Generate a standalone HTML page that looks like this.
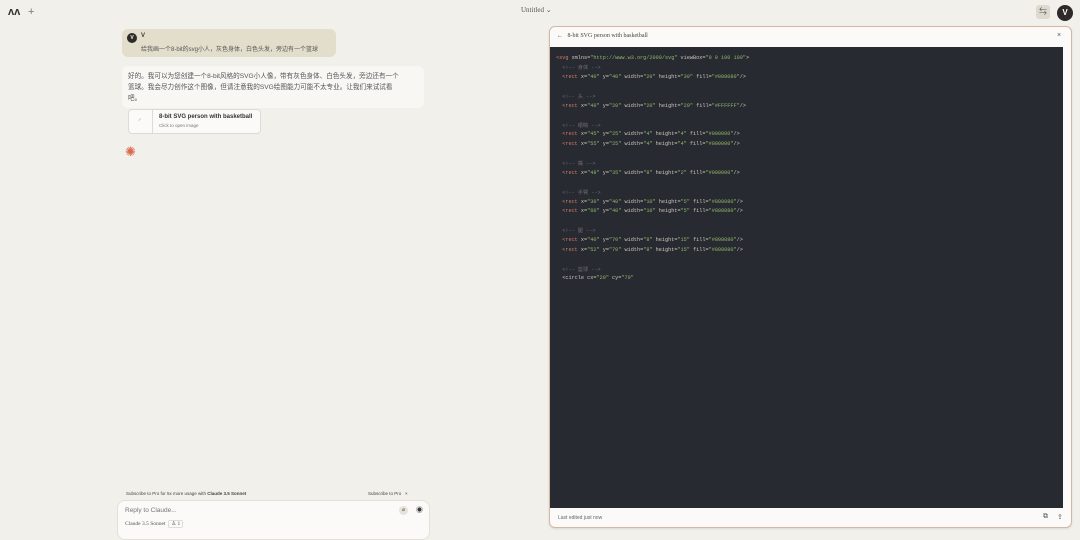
<!DOCTYPE html>
<html><head><meta charset="utf-8"><style>
*{margin:0;padding:0;box-sizing:border-box}
body{width:1080px;height:536px;background:#f2f0eb;font-family:"Liberation Sans","Noto Sans CJK SC",sans-serif;position:relative;overflow:hidden;color:#3a3835}
.abs{position:absolute}
.code{position:absolute;left:550px;top:47px;width:513px;height:461px;background:#282a31;font-family:"Liberation Mono",monospace;font-size:5.2px;color:#c9c6b8}
.code div{position:absolute;left:6px;white-space:pre}
.g{color:#8fb56a}.o{color:#d79a6a}.c{color:#6b6d72}.r{color:#d07a6a}
</style></head><body>
<div class="abs" style="left:8px;top:6px;font-weight:bold;font-size:11px;color:#333">ʌʌ</div>
<div class="abs" style="left:28px;top:6px;font-size:11px;color:#777">+</div>
<div class="abs" style="left:521px;top:6px;font-size:7px;color:#555;font-family:'Liberation Serif',serif">Untitled ⌄</div>
<div class="abs" style="left:1036px;top:5px;width:14px;height:14px;background:#dcd9cf;border-radius:3px;font-size:8px;text-align:center;line-height:14px;color:#555">⇆</div>
<div class="abs" style="left:1057px;top:5px;width:16px;height:16px;background:#2d2a27;border-radius:50%;color:#fff;font-size:8px;font-weight:bold;text-align:center;line-height:16px">V</div>

<div class="abs" style="left:122px;top:29px;width:214px;height:28px;background:#e3ddcb;border-radius:6px"></div>
<div class="abs" style="left:127px;top:33px;width:10px;height:10px;background:#2d2a27;border-radius:50%;color:#fff;font-size:5px;text-align:center;line-height:10px;font-weight:bold">V</div>
<div class="abs" style="left:141px;top:33px;font-size:6px;font-weight:bold">V</div>
<div class="abs" style="left:141px;top:44px;font-size:6px;color:#555">给我画一个8-bit的svg小人，灰色身体，白色头发，旁边有一个篮球</div>

<div class="abs" style="left:122px;top:66px;width:302px;height:42px;background:#f8f7f4;border-radius:6px"></div>
<div class="abs" style="left:128px;top:71px;white-space:nowrap;font-size:6.6px;line-height:11px;color:#555">好的。我可以为您创建一个8-bit风格的SVG小人像，带有灰色身体、白色头发，旁边还有一个<br>篮球。我会尽力创作这个图像，但请注意我的SVG绘图能力可能不太专业。让我们来试试看<br>吧。</div>
<div class="abs" style="left:128px;top:109px;width:133px;height:25px;background:#fbfaf8;border:1px solid #dedbd2;border-radius:4px"></div>
<div class="abs" style="left:128px;top:109px;width:25px;height:25px;border-right:1px solid #dedbd2;font-size:7px;color:#999;text-align:center;line-height:25px">◜</div>
<div class="abs" style="left:159px;top:114px;font-size:6px;font-weight:bold;color:#333">8-bit SVG person with basketball</div>
<div class="abs" style="left:159px;top:123px;font-size:4.5px;color:#777">Click to open image</div>
<div class="abs" style="left:125px;top:144px;font-size:13px;color:#d9694a">✺</div>

<div class="abs" style="left:126px;top:491px;font-size:4.5px;color:#444">Subscribe to Pro for 5x more usage with <b>Claude 3.5 Sonnet</b></div>
<div class="abs" style="left:368px;top:491px;font-size:4.5px;color:#444">Subscribe to Pro &nbsp;&nbsp;×</div>
<div class="abs" style="left:117px;top:500px;width:313px;height:40px;background:#fbfaf8;border:1px solid #e4e1d9;border-radius:8px"></div>
<div class="abs" style="left:125px;top:507px;font-size:6.5px;color:#777">Reply to Claude...</div>
<div class="abs" style="left:125px;top:521px;font-size:5.5px;color:#555;font-family:'Liberation Serif',serif">Claude 3.5 Sonnet &nbsp;<span style="border:1px solid #ddd;padding:0 2px;border-radius:2px">♙ 1</span></div>
<div class="abs" style="left:399px;top:506px;width:9px;height:9px;border-radius:50%;background:#e6e3dc;font-size:5px;text-align:center;line-height:9px">⌀</div>
<div class="abs" style="left:415px;top:506px;width:9px;height:9px;border-radius:50%;font-size:7px;text-align:center;line-height:9px">◉</div>

<div class="abs" style="left:549px;top:26px;width:523px;height:502px;background:#fbfaf8;border:1px solid #d3b9a5;border-radius:6px;box-shadow:0 1px 2px rgba(0,0,0,.1)"></div>
<div class="abs" style="left:557px;top:33px;font-size:6px;color:#444;font-family:'Liberation Serif',serif">←&nbsp;&nbsp; 8-bit SVG person with basketball</div>
<div class="abs" style="left:1057px;top:32px;font-size:7px;color:#555">×</div>
<div class="code">
<div style="top:8px"><span class="r">&lt;svg</span> xmlns=<span class="g">"http://www.w3.org/2000/svg"</span> viewBox=<span class="g">"0 0 100 100"</span>&gt;</div>
<div class="c" style="top:17px">  &lt;!-- 身体 --&gt;</div>
<div style="top:27px">  <span class="r">&lt;rect</span> x=<span class="g">"40"</span> y=<span class="g">"40"</span> width=<span class="g">"20"</span> height=<span class="g">"30"</span> fill=<span class="g">"#808080"</span>/&gt;</div>
<div class="c" style="top:46px">  &lt;!-- 头 --&gt;</div>
<div style="top:56px">  <span class="r">&lt;rect</span> x=<span class="g">"40"</span> y=<span class="g">"20"</span> width=<span class="g">"20"</span> height=<span class="g">"20"</span> fill=<span class="g">"#FFFFFF"</span>/&gt;</div>
<div class="c" style="top:75px">  &lt;!-- 眼睛 --&gt;</div>
<div style="top:84px">  <span class="r">&lt;rect</span> x=<span class="g">"45"</span> y=<span class="g">"25"</span> width=<span class="g">"4"</span> height=<span class="g">"4"</span> fill=<span class="g">"#000000"</span>/&gt;</div>
<div style="top:94px">  <span class="r">&lt;rect</span> x=<span class="g">"55"</span> y=<span class="g">"25"</span> width=<span class="g">"4"</span> height=<span class="g">"4"</span> fill=<span class="g">"#000000"</span>/&gt;</div>
<div class="c" style="top:113px">  &lt;!-- 嘴 --&gt;</div>
<div style="top:123px">  <span class="r">&lt;rect</span> x=<span class="g">"48"</span> y=<span class="g">"35"</span> width=<span class="g">"8"</span> height=<span class="g">"2"</span> fill=<span class="g">"#000000"</span>/&gt;</div>
<div class="c" style="top:142px">  &lt;!-- 手臂 --&gt;</div>
<div style="top:152px">  <span class="r">&lt;rect</span> x=<span class="g">"30"</span> y=<span class="g">"40"</span> width=<span class="g">"10"</span> height=<span class="g">"5"</span> fill=<span class="g">"#808080"</span>/&gt;</div>
<div style="top:161px">  <span class="r">&lt;rect</span> x=<span class="g">"60"</span> y=<span class="g">"40"</span> width=<span class="g">"10"</span> height=<span class="g">"5"</span> fill=<span class="g">"#808080"</span>/&gt;</div>
<div class="c" style="top:180px">  &lt;!-- 腿 --&gt;</div>
<div style="top:190px">  <span class="r">&lt;rect</span> x=<span class="g">"40"</span> y=<span class="g">"70"</span> width=<span class="g">"8"</span> height=<span class="g">"15"</span> fill=<span class="g">"#808080"</span>/&gt;</div>
<div style="top:200px">  <span class="r">&lt;rect</span> x=<span class="g">"52"</span> y=<span class="g">"70"</span> width=<span class="g">"8"</span> height=<span class="g">"15"</span> fill=<span class="g">"#808080"</span>/&gt;</div>
<div class="c" style="top:219px">  &lt;!-- 篮球 --&gt;</div>
<div style="top:228px">  &lt;circle cx=<span class="g">"20"</span> cy=<span class="g">"70"</span></div>
</div>
<div class="abs" style="left:558px;top:515px;font-size:5px;color:#666">Last edited just now</div>
<div class="abs" style="left:1043px;top:513px;font-size:7px;color:#555">⧉</div>
<div class="abs" style="left:1057px;top:513px;font-size:7px;color:#555">⇪</div>
</body></html>
